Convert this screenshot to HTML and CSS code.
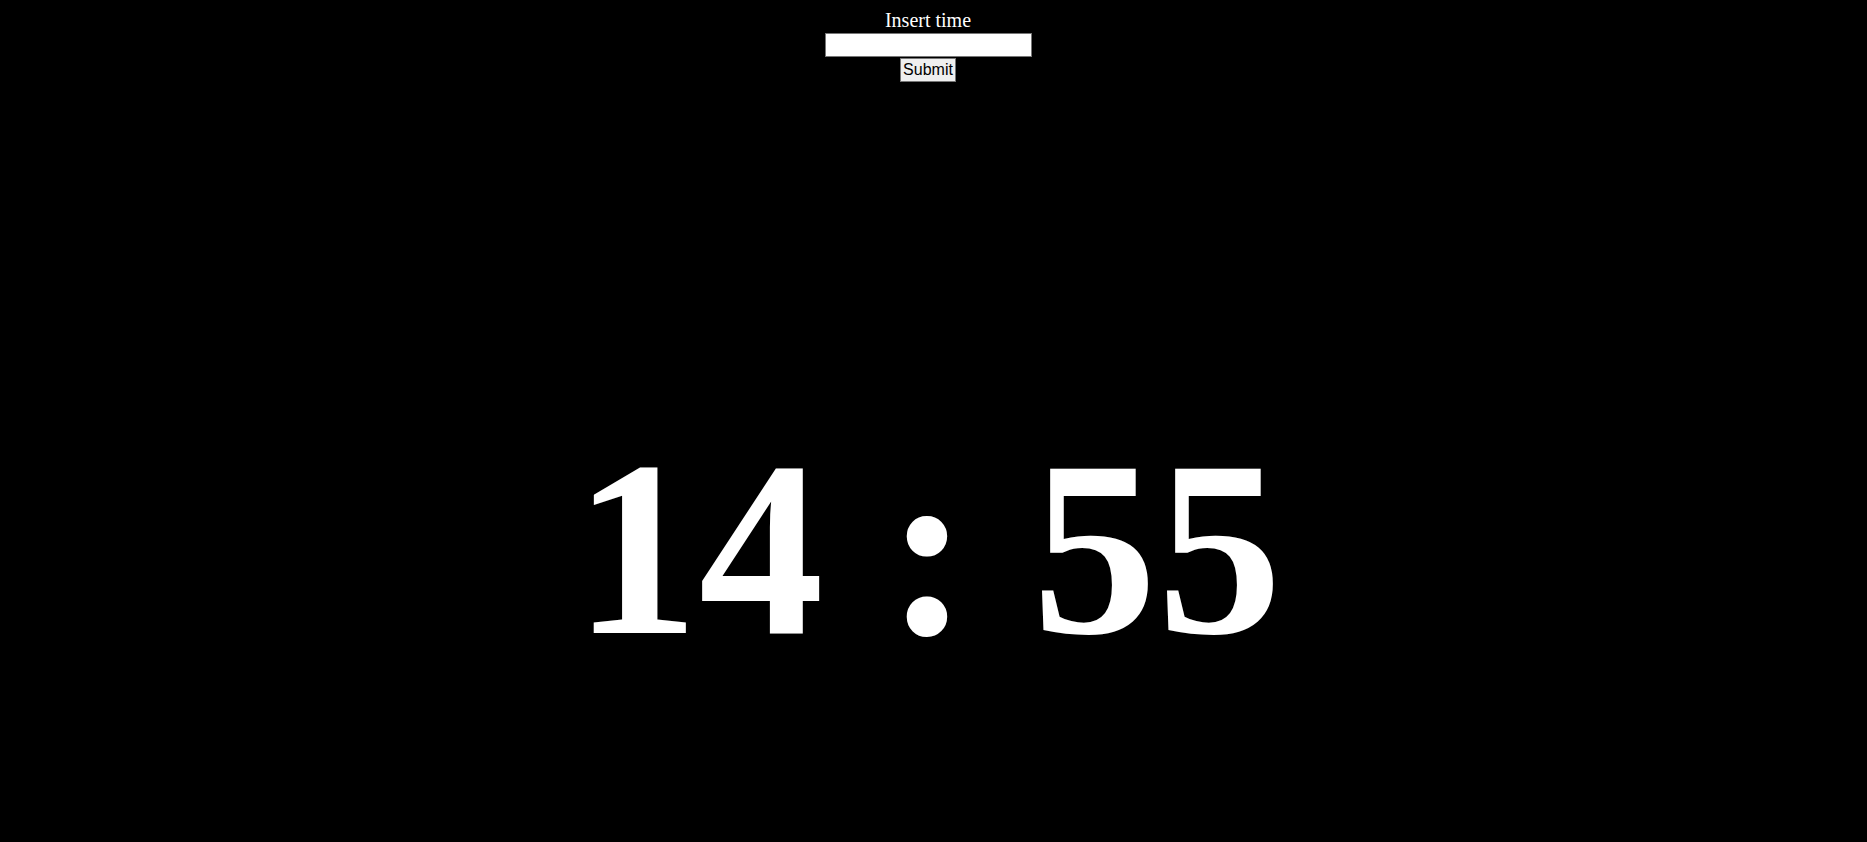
FILE: index.html
```html
<!DOCTYPE html>
<html>
<head>
<meta charset="utf-8">
<title>Clock</title>
<link rel="stylesheet" href="styles.css">
</head>
<body>
<form class="time-form">
  <label class="time-label" for="time">Insert time</label>
  <input class="time-input" id="time" type="text">
  <button class="time-submit" type="button">Submit</button>
</form>
<div class="clock">14 : 55</div>
</body>
</html>
```

FILE: styles.css
```css
html, body {
  background: #000;
}
body {
  margin: 9px 11px 0 0;
  color: #fff;
  font-family: "Liberation Serif", "Times New Roman", serif;
  overflow: hidden;
}
.time-form {
  display: flex;
  flex-direction: column;
  align-items: center;
  margin: 0;
}
.time-label {
  font-size: 20px;
  line-height: 23px;
  color: #fff;
}
.time-input {
  box-sizing: border-box;
  width: 207px;
  height: 24px;
  margin: 1px 0 0 0;
  padding: 1px 2px;
  border: 1px solid #767676;
  background: #fff;
  font-size: 16px;
  outline: none;
}
.time-submit {
  box-sizing: border-box;
  width: 56px;
  height: 24px;
  margin: 1px 0 0 0;
  padding: 0;
  border: 1px solid #767676;
  border-radius: 0;
  background: #efefef;
  color: #000;
  font-family: "Liberation Sans", Arial, sans-serif;
  font-size: 16px;
  line-height: 20px;
}
.clock {
  margin-top: 323px;
  text-align: center;
  font-size: 250px;
  font-weight: bold;
  line-height: normal;
  color: #fff;
  white-space: pre;
}
```
